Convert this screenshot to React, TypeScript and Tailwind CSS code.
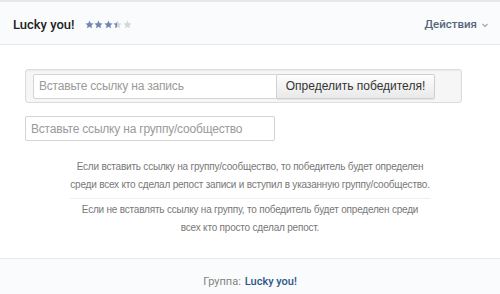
import React from 'react';

const Star: React.FC<{ fill: 'full' | 'half' | 'empty' }> = ({ fill }) => {
  const id = React.useId();
  const blue = '#6f86ad';
  const gray = '#d3d6db';
  return (
    <svg width="9" height="9" viewBox="0 0 24 24">
      <defs>
        <linearGradient id={id}>
          <stop offset="50%" stopColor={blue} />
          <stop offset="50%" stopColor={gray} />
        </linearGradient>
      </defs>
      <path
        d="M12 1.5l3.2 7 7.6.8-5.7 5.1 1.6 7.5L12 18l-6.7 3.9 1.6-7.5L1.2 9.3l7.6-.8z"
        fill={fill === 'full' ? blue : fill === 'empty' ? gray : `url(#${id})`}
      />
    </svg>
  );
};

const App: React.FC = () => {
  return (
    <div className="w-[500px] h-[294px] bg-white flex flex-col" style={{ fontFamily: '"Liberation Sans", Arial, sans-serif' }}>
      {/* Header */}
      <div className="h-[45px] border-t-2 border-b border-t-[#e7e8ec] border-b-[#e7e8ec] bg-[#fafbfc] flex items-center justify-between pl-[13px] pr-[4px] pt-[3px]" style={{ fontFamily: 'Roboto, sans-serif' }}>
        <div className="flex items-center">
          <span className="text-[13px] font-medium text-[#222222]">Lucky you!</span>
          <div className="flex ml-[10px] gap-[0.5px]">
            <Star fill="full" />
            <Star fill="full" />
            <Star fill="full" />
            <Star fill="half" />
            <Star fill="empty" />
          </div>
        </div>
        <div className="flex items-center text-[11.5px] font-medium text-[#55677d] mr-[6px]">
          <span>Действия</span>
          <svg width="10" height="10" viewBox="0 0 10 10" className="ml-[3px] mt-[1px]">
            <path d="M2.5 4l2.5 2.5L7.5 4" stroke="#99a2ad" strokeWidth="1.1" fill="none" />
          </svg>
        </div>
      </div>

      {/* Content */}
      <div className="flex-1 flex flex-col px-[25px] pt-[24px]">
        <div className="w-[437px] h-[34px] border border-[#dcdcdc] rounded-[3px] bg-[#f6f6f6] shadow-[inset_0_1px_2px_rgba(0,0,0,0.05)] flex items-center pl-[7px]">
          <input
            className="w-[244px] h-[25px] border border-[#d4d4d4] rounded-l-[2px] bg-white px-[5px] text-[12px] tracking-[-0.2px] text-[#333] placeholder:text-[#9a9a9a] outline-none"
            placeholder="Вставьте ссылку на запись"
          />
          <button className="w-[158px] h-[25px] border border-l-0 border-[#cfcfcf] rounded-r-[2px] bg-gradient-to-b from-[#fdfdfd] to-[#e9e9e9] text-[12px] text-[#333] shadow-[0_1px_1px_rgba(0,0,0,0.08)]">
            Определить победителя!
          </button>
        </div>

        <input
          className="mt-[13px] w-[250px] h-[25px] border border-[#d4d4d4] rounded-[2px] bg-white px-[5px] text-[12px] tracking-[-0.2px] text-[#333] placeholder:text-[#9a9a9a] outline-none"
          placeholder="Вставьте ссылку на группу/сообщество"
        />

        <div className="mt-[17px] flex flex-col items-center text-[10px] tracking-[-0.2px] leading-[18px] text-[#787878] text-center">
          <p className="w-[368px]">
            Если вставить ссылку на группу/сообщество, то победитель будет определен среди всех кто сделал репост записи и вступил в указанную группу/сообщество.
          </p>
          <div className="w-[360px] h-px bg-[#efefef] mt-[4px] mb-[2px]" />
          <p className="w-[350px]">
            Если не вставлять ссылку на группу, то победитель будет определен среди всех кто просто сделал репост.
          </p>
        </div>
      </div>

      {/* Footer */}
      <div className="h-[36px] border-t border-[#e7e8ec] bg-[#fafbfc] flex items-start justify-center pt-[16px] text-[11px] leading-[14px]" style={{ fontFamily: 'Roboto, sans-serif' }}>
        <span className="text-[#828282]">Группа:</span>
        <span className="ml-[4px] font-medium text-[#2a5885]">Lucky you!</span>
      </div>
    </div>
  );
};

export default App;
